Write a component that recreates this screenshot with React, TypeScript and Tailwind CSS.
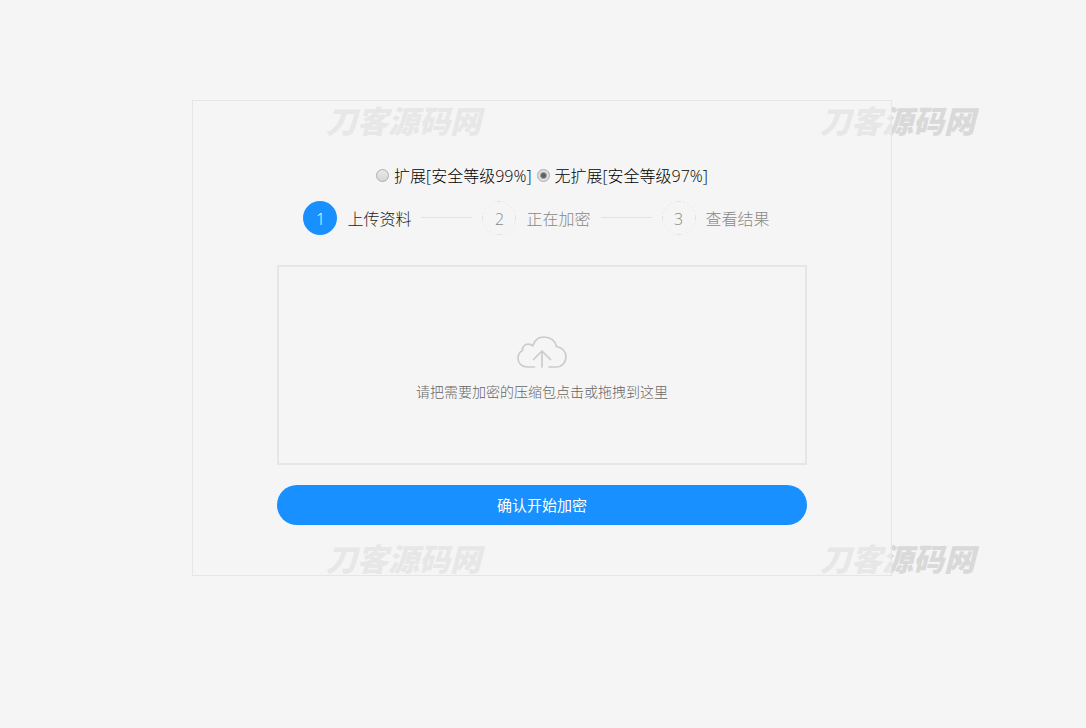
import React, { useState } from 'react';

const steps = ['上传资料', '正在加密', '查看结果'];

const modes = [
  { value: 'extension', label: '扩展[安全等级99%]' },
  { value: 'plain', label: '无扩展[安全等级97%]' },
];

const Watermark: React.FC<{ className: string }> = ({ className }) => (
  <span
    aria-hidden="true"
    className={`absolute text-[31px] leading-8 font-black italic whitespace-nowrap text-[#d9d9d9] select-none ${className}`}
  >
    刀客源码网
  </span>
);

const CloudIcon: React.FC = () => (
  <svg width="50" height="32" viewBox="0 0 50 32" fill="none" stroke="#cccccc" strokeWidth="1.7" strokeLinecap="round" strokeLinejoin="round">
    <path d="M17.500 31H10.500C5 31 1 27.500 1 22.500C1 18.500 2.800 15.800 5.500 14.500C5 10.500 8 8 11.500 8.200C13.300 8.300 14.700 9 15.800 9.900C17.500 4.500 21.800 1 27 1C33.500 1 38.500 5 39.500 10.500C45 11.500 49 15.500 49 20.500C49 26.500 45 31 39 31H32" />
    <path d="M25 31V15M16.500 23.500L25 15L33.500 23.500" />
  </svg>
);

const DottedRing: React.FC = () => (
  <svg className="absolute inset-0" viewBox="0 0 34 34" fill="none" stroke="#e2e2e2" aria-hidden="true">
    <circle cx="17" cy="17" r="16.5" strokeDasharray="1 3.320" />
    <path d="M15 .5h4M15 33.500h4M.5 15v4M33.500 15v4" />
  </svg>
);

const App: React.FC = () => {
  const [mode, setMode] = useState('plain');

  return (
    <div className="min-h-screen bg-[#f5f5f5] py-[100px] pr-[18px] pl-4 font-['Open_Sans','Noto_Sans_CJK_SC',sans-serif] text-black">
      <div className="relative isolate mx-auto w-full max-w-[700px]">
        <Watermark className="top-[5px] left-[134px]" />
        <Watermark className="top-[5px] left-[628px]" />
        <Watermark className="bottom-[1px] left-[134px]" />
        <Watermark className="bottom-[1px] left-[628px]" />

        <form
          className="relative border border-[#e6e6e6] bg-[#f5f5f5]/50 px-5 pt-[63px] pb-[50px]"
          onSubmit={(e) => e.preventDefault()}
        >
          <div className="mx-auto max-w-[530px]">
            <div className="flex justify-center gap-[5px] text-base leading-6 font-light">
              {modes.map((m) => (
                <label key={m.value} className="flex items-center gap-[5px]">
                  <input
                    type="radio"
                    name="mode"
                    value={m.value}
                    checked={mode === m.value}
                    onChange={() => setMode(m.value)}
                    className="mb-0.5 size-[13px] appearance-none rounded-full border border-[#acacac] bg-linear-to-b from-[#e9e9e9] to-[#d6d6d6] checked:bg-[radial-gradient(circle,#606060_0,#606060_2px,#dedede_4px)]"
                  />
                  {m.label}
                </label>
              ))}
            </div>

            <ol className="mt-[13px] flex items-center justify-center gap-2.5 pr-[11px] text-base leading-6 font-light">
              {steps.map((step, i) => (
                <li key={step} className={`flex items-center gap-2.5 ${i === 0 ? 'text-[#222222]' : 'text-[#888888]'}`}>
                  <span
                    className={`relative flex size-[34px] items-center justify-center rounded-full pt-0.5 ${
                      i === 0 ? 'bg-[#1890ff] text-white' : ''
                    }`}
                  >
                    {i > 0 && <DottedRing />}
                    {i + 1}
                  </span>
                  <span className="pt-0.5">{step}</span>
                  {i < steps.length - 1 && <span className="mb-0.5 h-px w-[51px] bg-[#e2e2e2]" />}
                </li>
              ))}
            </ol>

            <label className="mt-[30px] flex h-[200px] cursor-pointer flex-col items-center justify-center gap-3.5 border-2 border-[#e6e6e6] pt-2 text-sm leading-5 font-light text-[#666666]">
              <CloudIcon />
              请把需要加密的压缩包点击或拖拽到这里
              <input type="file" className="sr-only" />
            </label>

            <button type="submit" className="mt-5 h-10 w-full cursor-pointer rounded-full bg-[#1890ff] text-[15px] text-white">
              确认开始加密
            </button>
          </div>
        </form>
      </div>
    </div>
  );
};

export default App;
